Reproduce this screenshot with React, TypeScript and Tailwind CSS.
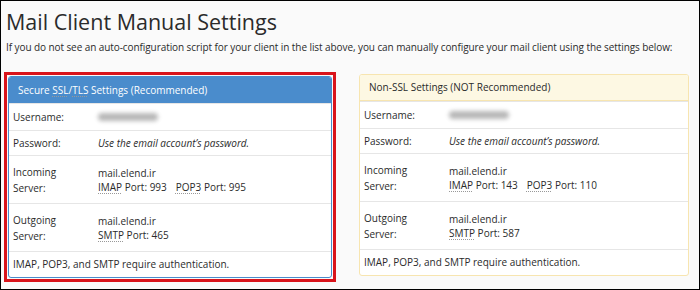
import React from "react"

type Props = {
  title: React.ReactNode
  headerClass: string
  borderClass: string
  imap: number
  pop3: number
  smtp: number
}

const Abbr = ({ children }: { children: React.ReactNode }) => (
  <span className="underline decoration-dotted decoration-[#999] underline-offset-2">{children}</span>
)

const Row = ({ label, children, h }: { label: React.ReactNode; children: React.ReactNode; h: string }) => (
  <div className={`flex items-center border-t border-[#e6e6e6] ${h}`}>
    <div className="w-[89px] shrink-0 pl-[4px] leading-[16px]">{label}</div>
    <div className="leading-[14px]">{children}</div>
  </div>
)

// one settings panel
const SettingsPanel = ({ title, headerClass, borderClass, imap, pop3, smtp }: Props) => (
  <div className={`bg-white border rounded-[3px] overflow-hidden ${borderClass}`}>
    <div className={`h-[26px] flex items-center pl-[9px] ${headerClass}`}>{title}</div>
    <Row label="Username:" h="h-[27px]">
      <div className="w-[60px] h-[8px] rounded-full bg-[#b8b8b8] blur-[2px]" />
    </Row>
    <Row label="Password:" h="h-[25px]">
      <span className="italic">Use the email account’s password.</span>
    </Row>
    <Row label={<>Incoming<br />Server:</>} h="h-[48px]">
      <div>mail.elend.ir</div>
      <div>
        <Abbr>IMAP</Abbr> Port: {imap}
        <span className="ml-[9px]"><Abbr>POP3</Abbr> Port: {pop3}</span>
      </div>
    </Row>
    <Row label={<>Outgoing<br />Server:</>} h="h-[48px]">
      <div>mail.elend.ir</div>
      <div>
        <Abbr>SMTP</Abbr> Port: {smtp}
      </div>
    </Row>
    <div className="h-[26px] flex items-center pl-[4px] border-t border-[#e6e6e6]">
      IMAP, POP3, and SMTP require authentication.
    </div>
  </div>
)

export default function App() {
  return (
    <div
      className="w-[700px] h-[290px] bg-[#fafafa] border border-black text-[#2b2b2b] text-[10px] overflow-hidden"
      style={{ fontFamily: '"Open Sans", "Liberation Sans", sans-serif' }}
    >
      <h1 className="text-[21.5px] leading-[28px] font-normal pl-[5px] pt-[7px]">Mail Client Manual Settings</h1>
      <p className="pl-[5px] mt-[3px] leading-[16px] tracking-[-0.08px] whitespace-nowrap">
        If you do not see an auto-configuration script for your client in the list above, you can manually configure your mail client using the settings below:
      </p>

      <div className="grid grid-cols-[324px_330px] gap-[27px] pl-[7px] mt-[19px] items-start">
        <div className="mt-[2px] outline-[3px] outline-solid outline-[#d9141b] outline-offset-[1px]">
          <SettingsPanel
            title={<span className="text-white">Secure <Abbr>SSL</Abbr>/<Abbr>TLS</Abbr> Settings (Recommended)</span>}
            headerClass="bg-[#4a8ccc]"
            borderClass="border-[#4a8ccc]"
            imap={993}
            pop3={995}
            smtp={465}
          />
        </div>
        <div>
          <SettingsPanel
            title="Non-SSL Settings (NOT Recommended)"
            headerClass="bg-[#fdf8e3] border-b border-[#f7e5b0]"
            borderClass="border-[#f7e5b0]"
            imap={143}
            pop3={110}
            smtp={587}
          />
        </div>
      </div>
    </div>
  )
}
